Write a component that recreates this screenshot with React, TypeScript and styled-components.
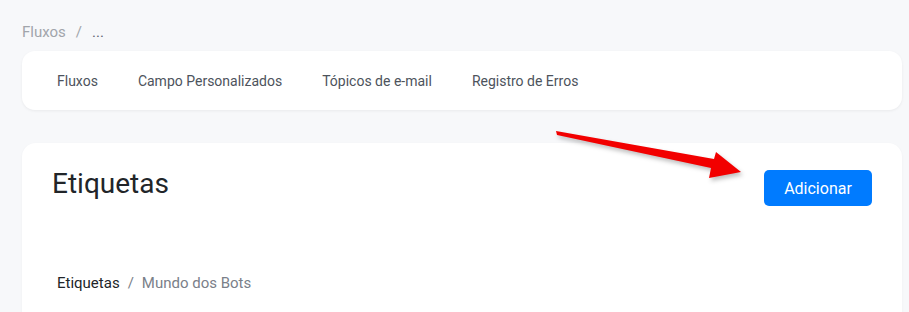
import React from 'react'
import styled, { createGlobalStyle } from 'styled-components'

const GlobalStyle = createGlobalStyle`
	body {
		margin: 0;
		background: #f7f8fa;
		font-family: Roboto, 'Liberation Sans', sans-serif;
	}
`

const Page = styled.div`
	position: relative;
	padding: 22px 7px 0 22px;
	height: 312px;
	box-sizing: border-box;
	overflow: hidden;
`

const TopCrumbs = styled.div`
	display: flex;
	gap: 10px;
	font-size: 15px;
	line-height: 20px;
	color: #a1a5ab;
	margin-bottom: 9px;
`

const CrumbCurrent = styled.span`
	color: #5c6370;
`

const NavCard = styled.nav`
	display: flex;
	align-items: center;
	height: 59px;
	padding: 0 15px;
	background: #fff;
	border-radius: 13px;
	box-shadow: 0 1px 3px rgba(0, 0, 0, 0.06);
`

const Tab = styled.a`
	padding: 0 20px;
	font-size: 14px;
	color: #4d535c;
	text-decoration: none;
	cursor: pointer;
`

const MainCard = styled.section`
	margin-top: 33px;
	height: 200px;
	background: #fff;
	border-radius: 14px;
	padding: 27px 30px 0 30px;
	box-shadow: 0 1px 3px rgba(0, 0, 0, 0.04);
`

const Header = styled.div`
	display: flex;
	justify-content: space-between;
	align-items: flex-start;
`

const Title = styled.h1`
	margin: 0;
	font-size: 28px;
	font-weight: 400;
	line-height: 28px;
	color: #212529;
`

const AddButton = styled.button`
	width: 108px;
	height: 36px;
	border: none;
	border-radius: 5px;
	background: #007bff;
	color: #fff;
	font-family: inherit;
	font-size: 16px;
	cursor: pointer;
`

const BottomCrumbs = styled.div`
	display: flex;
	gap: 8px;
	margin-top: 68px;
	padding-left: 5px;
	font-size: 15px;
	color: #7a8089;
`

const CrumbDark = styled.span`
	color: #212529;
`

const Arrow = styled.svg`
	position: absolute;
	left: 550px;
	top: 125px;
	filter: drop-shadow(2px 3px 2px rgba(0, 0, 0, 0.25));
`

export default function App() {
	return (
		<Page>
			<GlobalStyle />
			<TopCrumbs>
				<span>Fluxos</span>
				<span>/</span>
				<CrumbCurrent>...</CrumbCurrent>
			</TopCrumbs>
			<NavCard>
				<Tab>Fluxos</Tab>
				<Tab>Campo Personalizados</Tab>
				<Tab>Tópicos de e-mail</Tab>
				<Tab>Registro de Erros</Tab>
			</NavCard>
			<MainCard>
				<Header>
					<Title>Etiquetas</Title>
					<AddButton>Adicionar</AddButton>
				</Header>
				<BottomCrumbs>
					<CrumbDark>Etiquetas</CrumbDark>
					<span>/</span>
					<span>Mundo dos Bots</span>
				</BottomCrumbs>
			</MainCard>
			<Arrow width="200" height="60" viewBox="0 0 200 60">
				<polygon
					points="6,6 7,10 161,43 159,53 191,47 166,27 164,34"
					fill="#f20000"
				/>
			</Arrow>
		</Page>
	)
}
